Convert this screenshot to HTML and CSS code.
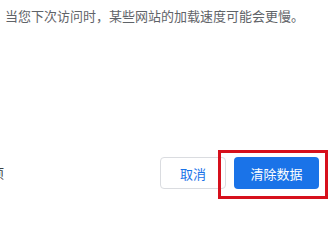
FILE: index.html
```html
<!DOCTYPE html>
<html lang="zh-CN">
<head>
<meta charset="utf-8">
<link rel="stylesheet" href="styles.css">
</head>
<body>
<div class="dialog">
  <p class="note">当您下次访问时，某些网站的加载速度可能会更慢。</p>
  <div class="footer">
    <span class="link">选项</span>
    <div class="actions">
      <button class="btn cancel">取消</button>
      <div class="highlight-wrap">
        <button class="btn primary">清除数据</button>
        <span class="highlight"></span>
      </div>
    </div>
  </div>
</div>
</body>
</html>
```
FILE: styles.css
```css
html, body {
  margin: 0;
  padding: 0;
  background: #ffffff;
}
body {
  width: 331px;
  height: 203px;
  overflow: hidden;
  font-family: "Noto Sans CJK SC", "Noto Sans", sans-serif;
}
.dialog {
  height: 203px;
  display: flex;
  flex-direction: column;
  box-sizing: border-box;
  padding: 0 12px 14px 5px;
}
.note {
  margin: 6px 0 0 0;
  font-size: 13px;
  line-height: 20px;
  color: #5f6368;
  white-space: nowrap;
}
.footer {
  margin-top: auto;
  display: flex;
  align-items: center;
}
.link {
  font-size: 13px;
  line-height: 20px;
  color: #3c4043;
  margin-left: -27px;
  white-space: nowrap;
}
.actions {
  margin-left: auto;
  display: flex;
  gap: 8px;
}
.btn {
  height: 32px;
  box-sizing: border-box;
  border-radius: 4px;
  font-family: "Noto Sans CJK SC", "Noto Sans", sans-serif;
  font-size: 13px;
  padding: 0;
  cursor: pointer;
}
.cancel {
  width: 66px;
  background: #ffffff;
  border: 1px solid #dadce0;
  color: #1a73e8;
}
.primary {
  width: 85px;
  background: #1a73e8;
  border: none;
  color: #ffffff;
}
.highlight-wrap {
  position: relative;
}
.highlight {
  position: absolute;
  left: -16px;
  top: -7px;
  width: 110px;
  height: 49px;
  box-sizing: border-box;
  border: 3px solid #d6101c;
  pointer-events: none;
}
```
